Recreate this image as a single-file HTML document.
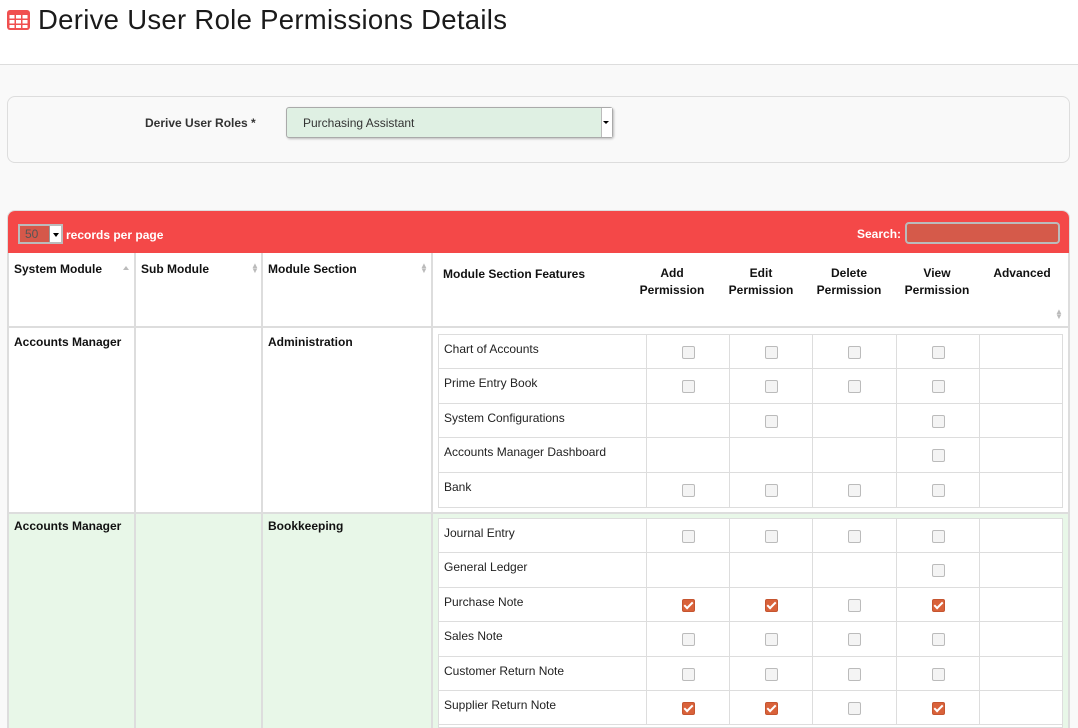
<!DOCTYPE html>
<html style="width:1078px;height:728px;overflow:hidden"><head><meta charset="utf-8"><style>
*{box-sizing:border-box;margin:0;padding:0}
body{width:1078px;height:728px;overflow:hidden;background:#f9f9f9;font-family:"Liberation Sans",sans-serif;font-size:12px;color:#111;position:relative}
.a{position:absolute}
.top{left:0;top:0;width:1078px;height:65px;background:#fff;border-bottom:1px solid #ddd}
h1{position:absolute;left:38px;top:4px;font-size:27.5px;font-weight:normal;color:#1a1a1a;letter-spacing:0.3px}
.panel{left:7px;top:96px;width:1063px;height:67px;border:1px solid #ddd;border-radius:8px;background:#f9f9f9}
.sel{left:286px;top:107px;width:327px;height:31px;border:1px solid #aaa;border-radius:3px;background:#dff0e3;box-shadow:1px 1px 2px #bbb}
.tbl{left:7px;top:210px;width:1063px;height:518px;border:1px solid #ddd;border-bottom:0;border-radius:8px 8px 0 0;background:#fff;overflow:hidden}
.red{left:0;top:0;width:1063px;height:43px;background:#f44848}
b{font-weight:bold}
.vl{width:2px;background:#ddd}
.hl{height:2px;background:#ddd}
.r{position:absolute;left:438px;width:625px;height:36px;border:1px solid #ddd;background:#fff}
.r i{position:absolute;top:0;width:1px;height:34px;background:#ddd}
.r span{position:absolute;left:5px;top:7px;font-size:12px;color:#222}
.c{position:absolute;top:11px;width:13px;height:13px;border:1px solid #bbb;border-radius:2px;background:#f4f4f4}
.k{background:#d9623a;border-color:#c55530}
.k:after{content:"";position:absolute;left:3px;top:0px;width:3px;height:7px;border:solid #fff;border-width:0 2px 2px 0;transform:rotate(45deg)}
.s1{left:243px}.s2{left:326px}.s3{left:409px}.s4{left:493px}
.hd{font-weight:bold;font-size:12px;text-align:center;line-height:17px}
</style></head><body>
<div class="a top"></div>
<svg class="a" style="left:7px;top:10px" width="23" height="20" viewBox="0 0 23 20"><rect x="0" y="0" width="23" height="20" rx="3" fill="#f05050"/><g fill="#fff"><rect x="2.5" y="5" width="5" height="3.5"/><rect x="9" y="5" width="5" height="3.5"/><rect x="15.5" y="5" width="5" height="3.5"/><rect x="2.5" y="10" width="5" height="3.5"/><rect x="9" y="10" width="5" height="3.5"/><rect x="15.5" y="10" width="5" height="3.5"/><rect x="2.5" y="15" width="5" height="3"/><rect x="9" y="15" width="5" height="3"/><rect x="15.5" y="15" width="5" height="3"/></g></svg>
<h1>Derive User Role Permissions Details</h1>
<div class="a panel"></div>
<div class="a" style="left:145px;top:116px;font-weight:bold;color:#333">Derive User Roles *</div>
<div class="a sel"><span class="a" style="left:16px;top:8px;color:#333">Purchasing Assistant</span><div class="a" style="right:0;top:0;width:11px;height:29px;background:#fff;border-left:1px solid #bbb"></div><div class="a" style="right:3px;top:13px;border:3px solid transparent;border-top:3px solid #000;width:0;height:0"></div></div>

<div class="a tbl">
<div class="a red"></div>
<div class="a" style="left:10px;top:13px;width:45px;height:20px;border:2px solid #bbb;background:#d5584a;color:#555;padding:1px 0 0 5px">50<div class="a" style="right:0;top:0;width:12px;height:16px;background:#fff;border-left:1px solid #999"></div><div class="a" style="right:2px;top:7px;border:3px solid transparent;border-top:4px solid #000"></div></div>
<div class="a" style="left:58px;top:17px;color:#fff;font-weight:bold">records per page</div>
<div class="a" style="left:849px;top:16px;color:#fff;font-weight:bold">Search:</div>
<div class="a" style="left:897px;top:11px;width:155px;height:22px;border:2px solid #bbb;border-radius:4px;background:#d55a4a"></div>
</div>

<div class="a" style="left:8px;top:253px;width:1061px;height:75px;background:#fff"></div>
<div class="a" style="left:14px;top:262px;font-weight:bold">System Module</div>
<div class="a" style="left:141px;top:262px;font-weight:bold">Sub Module</div>
<div class="a" style="left:268px;top:262px;font-weight:bold">Module Section</div>
<div class="a" style="left:443px;top:267px;font-weight:bold">Module Section Features</div>
<div class="a hd" style="left:632px;top:265px;width:80px">Add<br>Permission</div>
<div class="a hd" style="left:721px;top:265px;width:80px">Edit<br>Permission</div>
<div class="a hd" style="left:809px;top:265px;width:80px">Delete<br>Permission</div>
<div class="a hd" style="left:897px;top:265px;width:80px">View<br>Permission</div>
<div class="a hd" style="left:982px;top:265px;width:80px">Advanced</div>
<div class="a" style="left:123px;top:263px;border:3px solid transparent;border-bottom:4px solid #bbb"></div>
<div class="a" style="left:251px;top:263px;color:#bbb;font-size:8px;line-height:5px">▲<br>▼</div>
<div class="a" style="left:420px;top:263px;color:#bbb;font-size:8px;line-height:5px">▲<br>▼</div>
<div class="a" style="left:1055px;top:309px;color:#bbb;font-size:8px;line-height:5px">▲<br>▼</div>

<div class="a" style="left:8px;top:328px;width:1061px;height:185px;background:#fff"></div>
<div class="a" style="left:8px;top:513px;width:1061px;height:215px;background:#e8f7e8"></div>
<div class="a hl" style="left:8px;top:326px;width:1061px"></div>
<div class="a hl" style="left:8px;top:512px;width:1061px"></div>
<div class="a vl" style="left:7px;top:253px;height:475px"></div>
<div class="a vl" style="left:134px;top:253px;height:475px"></div>
<div class="a vl" style="left:261px;top:253px;height:475px"></div>
<div class="a vl" style="left:431px;top:253px;height:475px"></div>
<div class="a vl" style="left:1068px;top:253px;height:475px"></div>
<div class="a" style="left:14px;top:335px;font-weight:bold">Accounts Manager</div>
<div class="a" style="left:268px;top:335px;font-weight:bold">Administration</div>
<div class="a" style="left:14px;top:519px;font-weight:bold">Accounts Manager</div>
<div class="a" style="left:268px;top:519px;font-weight:bold">Bookkeeping</div>

<div class="r" style="top:334px"><span>Chart of Accounts</span><i style="left:207px"></i><i style="left:290px"></i><i style="left:373px"></i><i style="left:457px"></i><i style="left:540px"></i><b class="c s1"></b><b class="c s2"></b><b class="c s3"></b><b class="c s4"></b></div>
<div class="r" style="top:368px"><span>Prime Entry Book</span><i style="left:207px"></i><i style="left:290px"></i><i style="left:373px"></i><i style="left:457px"></i><i style="left:540px"></i><b class="c s1"></b><b class="c s2"></b><b class="c s3"></b><b class="c s4"></b></div>
<div class="r" style="top:403px"><span>System Configurations</span><i style="left:207px"></i><i style="left:290px"></i><i style="left:373px"></i><i style="left:457px"></i><i style="left:540px"></i><b class="c s2"></b><b class="c s4"></b></div>
<div class="r" style="top:437px"><span>Accounts Manager Dashboard</span><i style="left:207px"></i><i style="left:290px"></i><i style="left:373px"></i><i style="left:457px"></i><i style="left:540px"></i><b class="c s4"></b></div>
<div class="r" style="top:472px"><span>Bank</span><i style="left:207px"></i><i style="left:290px"></i><i style="left:373px"></i><i style="left:457px"></i><i style="left:540px"></i><b class="c s1"></b><b class="c s2"></b><b class="c s3"></b><b class="c s4"></b></div>

<div class="r" style="top:518px"><span>Journal Entry</span><i style="left:207px"></i><i style="left:290px"></i><i style="left:373px"></i><i style="left:457px"></i><i style="left:540px"></i><b class="c s1"></b><b class="c s2"></b><b class="c s3"></b><b class="c s4"></b></div>
<div class="r" style="top:552px"><span>General Ledger</span><i style="left:207px"></i><i style="left:290px"></i><i style="left:373px"></i><i style="left:457px"></i><i style="left:540px"></i><b class="c s4"></b></div>
<div class="r" style="top:587px"><span>Purchase Note</span><i style="left:207px"></i><i style="left:290px"></i><i style="left:373px"></i><i style="left:457px"></i><i style="left:540px"></i><b class="c k s1"></b><b class="c k s2"></b><b class="c s3"></b><b class="c k s4"></b></div>
<div class="r" style="top:621px"><span>Sales Note</span><i style="left:207px"></i><i style="left:290px"></i><i style="left:373px"></i><i style="left:457px"></i><i style="left:540px"></i><b class="c s1"></b><b class="c s2"></b><b class="c s3"></b><b class="c s4"></b></div>
<div class="r" style="top:656px"><span>Customer Return Note</span><i style="left:207px"></i><i style="left:290px"></i><i style="left:373px"></i><i style="left:457px"></i><i style="left:540px"></i><b class="c s1"></b><b class="c s2"></b><b class="c s3"></b><b class="c s4"></b></div>
<div class="r" style="top:690px"><span>Supplier Return Note</span><i style="left:207px"></i><i style="left:290px"></i><i style="left:373px"></i><i style="left:457px"></i><i style="left:540px"></i><b class="c k s1"></b><b class="c k s2"></b><b class="c s3"></b><b class="c k s4"></b></div>
<div class="r" style="top:724px;height:4px"></div>
</body></html>
